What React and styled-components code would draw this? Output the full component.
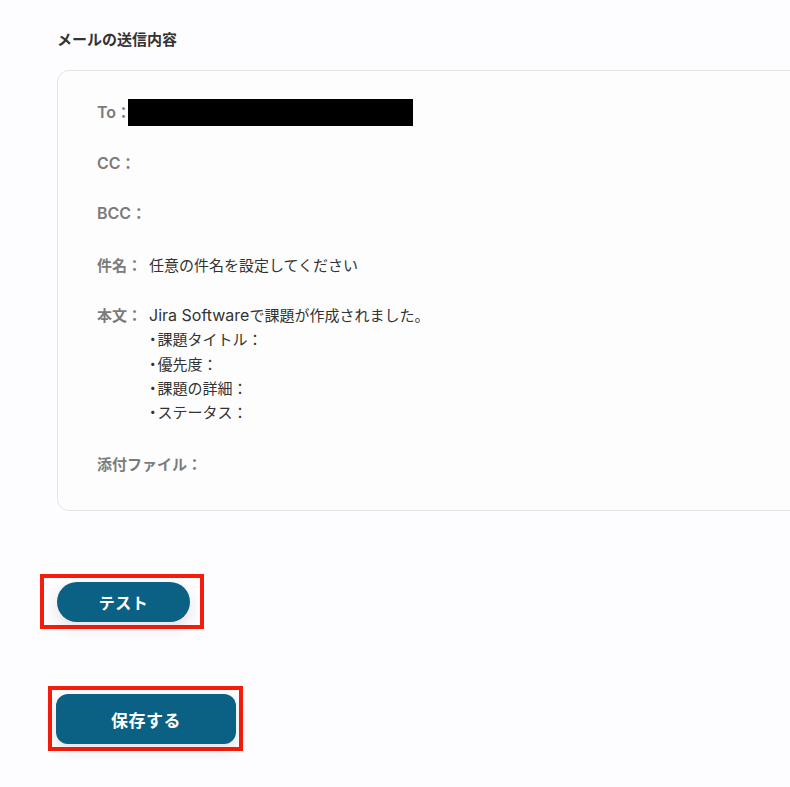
import React from "react";
import styled, { createGlobalStyle } from "styled-components";

const Global = createGlobalStyle`
  html, body { margin: 0; padding: 0; }
  body {
    background: #fdfcfe;
    overflow-x: hidden;
    font-family: Inter, "Noto Sans CJK JP", sans-serif;
    color: #333;
  }
`;

const Page = styled.div`
  display: flex;
  flex-direction: column;
  align-items: flex-start;
  padding: 30px 0 40px 57px;
  width: 790px;
  box-sizing: border-box;
  overflow: hidden;
`;

const Title = styled.h2`
  margin: 0 0 20px;
  font-size: 15px;
  line-height: 20px;
  font-weight: 700;
  color: #333;
`;

const Card = styled.div`
  width: 760px;
  box-sizing: border-box;
  flex-shrink: 0;
  background: #fdfdfd;
  border: 1px solid #e5e5e7;
  border-radius: 12px;
  padding: 28px 39px 33px;
  display: flex;
  flex-direction: column;
  gap: 26px;
`;

const Row = styled.div`
  display: flex;
  align-items: ${(p) => (p.$center ? "center" : "flex-start")};
  font-size: 15px;
  line-height: 24px;
  margin-top: ${(p) => p.$mt || 0}px;
`;

const Label = styled.span`
  color: #7b7b7b;
  font-weight: 600;
  white-space: nowrap;
`;

const Value = styled.div`
  margin-left: 7px;
  color: #333;
  font-weight: 400;
  line-height: ${(p) => p.$lh || 24}px;
`;

const Latin = styled.span`
  font-size: 16px;
  line-height: 1;
`;

const Line = styled.div``;

const Bullet = styled.span`
  font-feature-settings: "palt";
  margin-right: 1px;
`;

const Redacted = styled.span`
  display: inline-block;
  width: 285px;
  height: 27px;
  background: #000;
  margin-left: -3px;
`;

const Highlight = styled.div`
  border: 4px solid #f51c0c;
  padding: ${(p) => p.$pad};
  margin-left: ${(p) => p.$ml}px;
  margin-top: ${(p) => p.$mt}px;
  display: flex;
`;

const Button = styled.button`
  border: none;
  background: #0b6184;
  color: #fff;
  font-family: Inter, "Noto Sans CJK JP", sans-serif;
  font-weight: 700;
  font-size: ${(p) => p.$fs}px;
  width: ${(p) => p.$w}px;
  height: ${(p) => p.$h}px;
  border-radius: ${(p) => p.$r}px;
  box-shadow: 0 6px 14px rgba(40, 50, 70, 0.12);
  cursor: pointer;
  letter-spacing: 0.5px;
`;

const bodyLines = ["課題タイトル：", "優先度：", "課題の詳細：", "ステータス："];

export default function App() {
  return (
    <>
      <Global />
      <Page>
        <Title>メールの送信内容</Title>
        <Card>
          <Row $center>
            <Label><Latin>To</Latin>：</Label>
            <Redacted />
          </Row>
          <Row>
            <Label><Latin>CC</Latin>：</Label>
          </Row>
          <Row>
            <Label><Latin>BCC</Latin>：</Label>
          </Row>
          <Row $mt={2}>
            <Label>件名：</Label>
            <Value>任意の件名を設定してください</Value>
          </Row>
          <Row>
            <Label>本文：</Label>
            <Value $lh={24.3}>
              <Line><Latin>Jira Software</Latin>で課題が作成されました。</Line>
              {bodyLines.map((t) => (
                <Line key={t}>
                  <Bullet>・</Bullet>
                  {t}
                </Line>
              ))}
            </Value>
          </Row>
          <Row $mt={2}>
            <Label>添付ファイル：</Label>
          </Row>
        </Card>
        <Highlight $ml={-17} $mt={63} $pad="4px 10px 3px 13px">
          <Button $w={133} $h={40} $r={20} $fs={16}>テスト</Button>
        </Highlight>
        <Highlight $ml={-9} $mt={57} $pad="4px 3px 3px 4px">
          <Button $w={180} $h={50} $r={12} $fs={17}>保存する</Button>
        </Highlight>
      </Page>
    </>
  );
}
